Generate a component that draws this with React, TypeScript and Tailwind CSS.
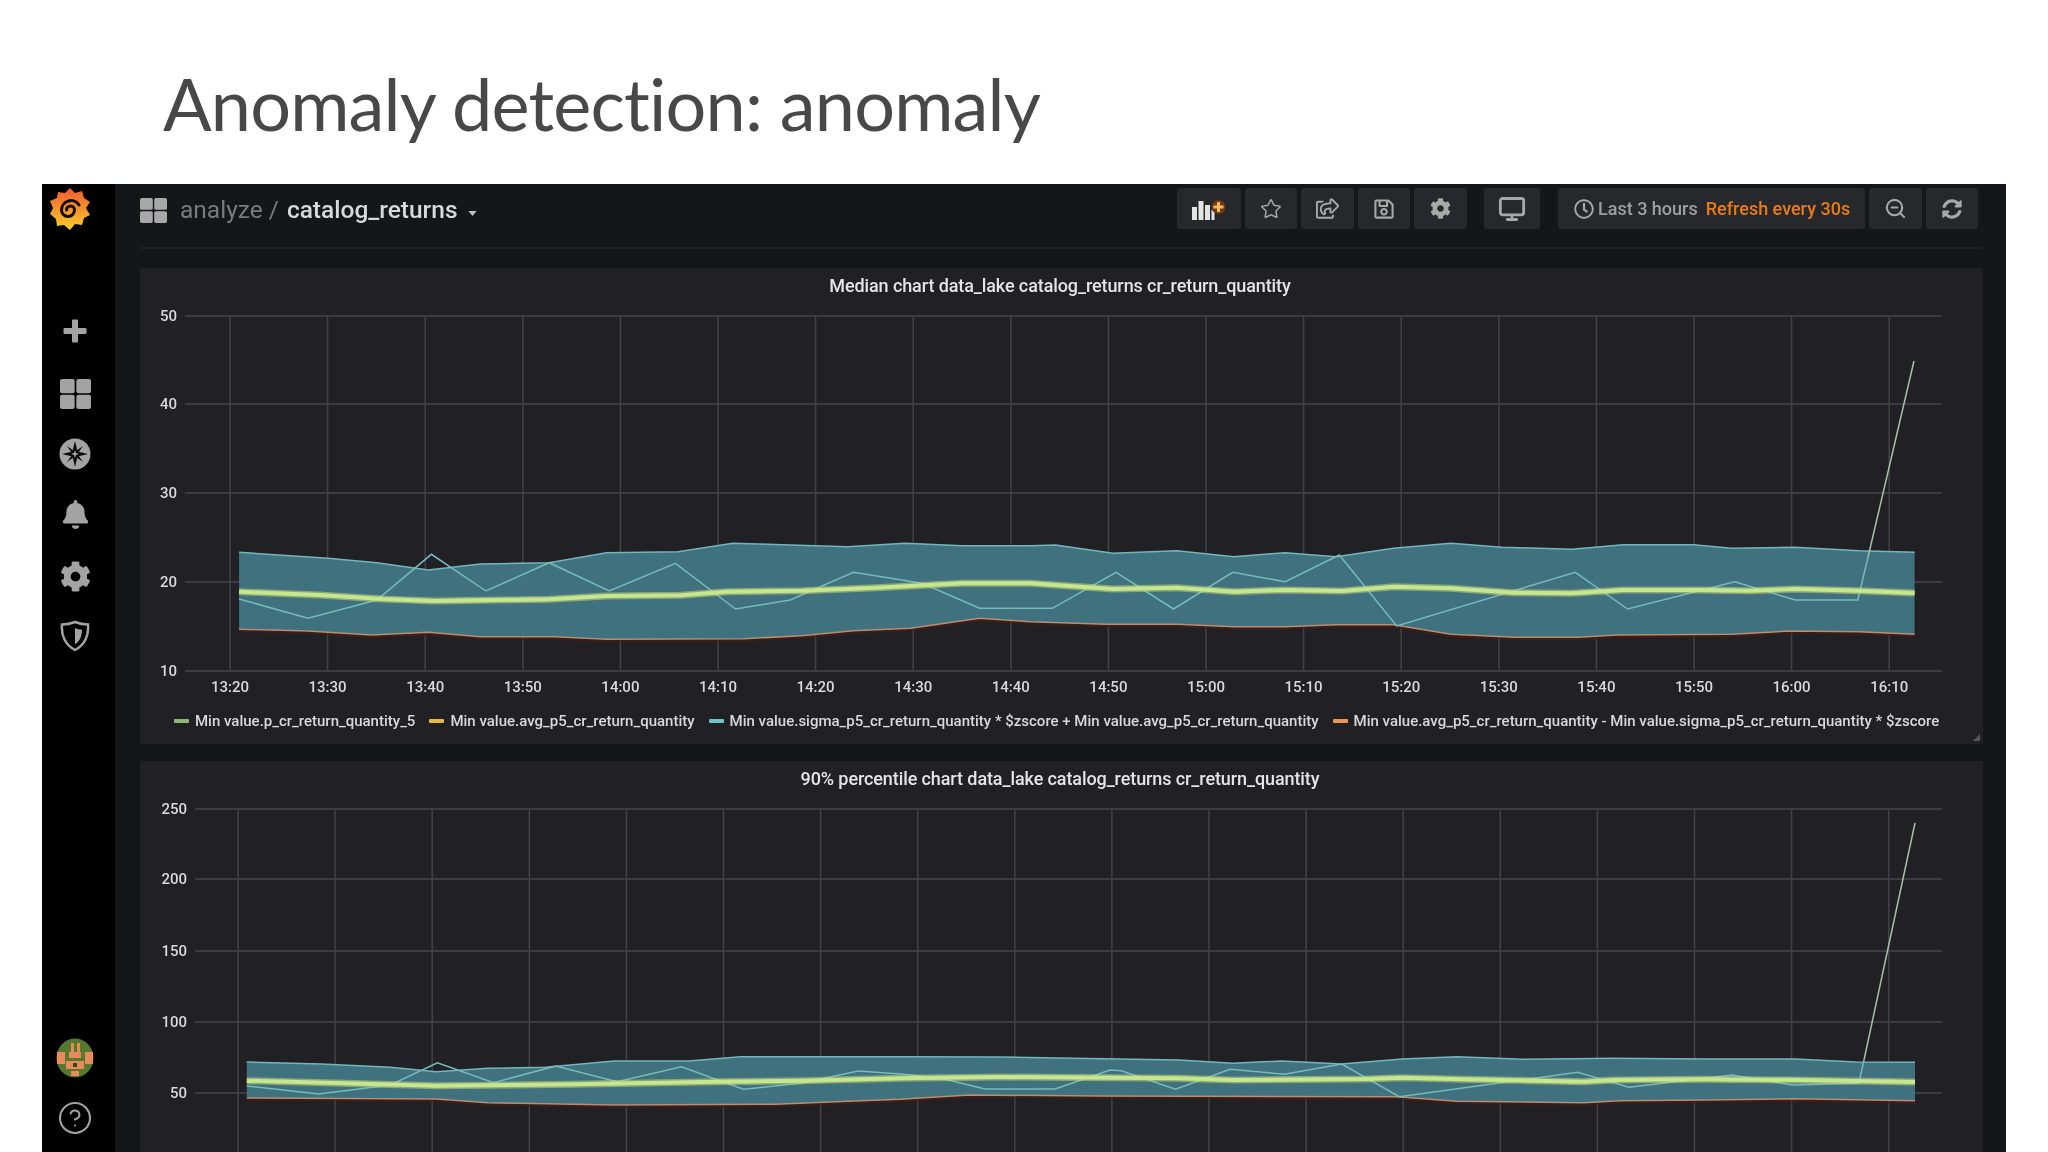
import { Star, Monitor, CircleHelp, ZoomOut } from 'lucide-react'
import { FaBell, FaCog, FaRegClock, FaRegSave, FaRegShareSquare, FaSyncAlt } from 'react-icons/fa'

type Pt = number[]

// helpers: points were read off crops of the picture, converted to page coordinates
const a = (p: Pt[]) => p.map(([x, y]) => [130 + x / 1.742, 520 + y / 3])
const b = (p: Pt[]) => p.map(([x, y]) => [1030 + x / 1.568, 520 + y / 3])
const c = (p: Pt[]) => p.map(([x, y]) => [x / 1.742, 760 + y / 3])
const d = (p: Pt[]) => p.map(([x, y]) => [1100 + x / 1.654, 760 + y / 3])
const str = (p: Pt[]) => p.map(([x, y]) => `${x.toFixed(1)},${y.toFixed(1)}`).join(' ')

const chart1 = {
  top: [...a([[190, 97], [345, 115], [430, 128], [520, 150], [610, 132], [730, 128], [830, 98], [955, 95], [1050, 70], [1150, 75], [1250, 80], [1350, 70], [1450, 77], [1568, 77]]), ...b([[40, 75], [130, 100], [230, 92], [320, 110], [400, 98], [480, 110], [570, 85], [660, 70], [740, 82], [850, 88], [930, 74], [1040, 74], [1100, 85], [1200, 82], [1300, 92], [1387, 97]])],
  bottom: [...a([[190, 328], [310, 333], [420, 345], [520, 337], [610, 350], [740, 350], [830, 358], [1070, 356], [1170, 347], [1260, 332], [1360, 325], [1480, 295], [1568, 305]]), ...b([[120, 313], [230, 313], [320, 320], [400, 320], [480, 314], [570, 314], [660, 343], [760, 352], [860, 352], [920, 345], [1100, 343], [1190, 333], [1300, 335], [1387, 343]])],
  mean: [...a([[190, 215], [330, 225], [440, 237], [530, 243], [730, 238], [830, 228], [960, 226], [1040, 215], [1170, 212], [1300, 203], [1450, 190], [1568, 190]]), ...b([[130, 207], [230, 203], [320, 215], [400, 210], [490, 213], [570, 200], [660, 205], [760, 218], [850, 220], [930, 210], [1050, 210], [1130, 212], [1200, 207], [1300, 212], [1387, 219]])],
  thin: [...a([[190, 237], [310, 295], [430, 240], [525, 103], [620, 213], [730, 128], [835, 213], [950, 130], [1055, 267], [1150, 240], [1260, 157], [1380, 190], [1480, 265], [1568, 265]]), ...b([[35, 265], [135, 157], [225, 267], [318, 157], [400, 185], [485, 105], [575, 318], [855, 157], [937, 267], [1105, 185], [1200, 240], [1298, 240]]), [1868.3, 556]],
  spike: [[1868.3, 556], [1914, 361]],
}

const chart2 = {
  top: [...c([[430, 906], [560, 912], [680, 922], [760, 935], [850, 925], [950, 922], [1070, 903], [1200, 903], [1290, 890], [1568, 890]]), [1000, 1057], ...d([[130, 900], [220, 910], [300, 903], [400, 912], [500, 897], [590, 890], [700, 898], [850, 895], [1000, 897], [1150, 897], [1250, 906], [1348, 907]])],
  bottom: [...c([[430, 1014], [760, 1017], [850, 1028], [1070, 1035], [1350, 1033], [1500, 1022], [1568, 1018]]), [920, 1098], [970, 1095], [1100, 1096], ...d([[490, 1010], [590, 1024], [800, 1028], [860, 1022], [1000, 1020], [1150, 1016], [1348, 1022]])],
  mean: [...c([[430, 962], [600, 970], [760, 977], [1000, 973], [1250, 965], [1400, 962], [1568, 955]]), [1000, 1077], ...d([[130, 955], [220, 960], [440, 957], [500, 953], [600, 958], [800, 965], [850, 960], [1000, 958], [1150, 960], [1348, 966]])],
  thin: [...c([[430, 978], [555, 1002], [680, 975], [762, 908], [860, 968], [968, 918], [1075, 965], [1187, 920], [1295, 988], [1395, 970], [1495, 933], [1568, 942]]), [940, 1078], [985, 1089], [1055, 1089], [1110, 1070], ...d([[35, 932], [125, 988], [215, 928], [305, 943], [400, 912], [495, 1010], [790, 937], [875, 982], [1045, 945], [1145, 975], [1255, 970]]), [1864, 1060]],
  spike: [[1864, 1060], [1915, 823]],
}

const times = ['13:20', '13:30', '13:40', '13:50', '14:00', '14:10', '14:20', '14:30', '14:40', '14:50', '15:00', '15:10', '15:20', '15:30', '15:40', '15:50', '16:00', '16:10']

function Series({ s }: { s: typeof chart1 }) {
  return (
    <>
      <polygon points={str([...s.top, ...[...s.bottom].reverse()])} fill="#417683" fillOpacity={0.95} />
      <polyline points={str(s.bottom.map(([x, y]) => [x, y + 2]))} fill="none" stroke="#4a1c16" strokeOpacity={0.7} strokeWidth={2} />
      <polyline points={str(s.bottom)} fill="none" stroke="#b98e74" strokeWidth={1.5} />
      <polyline points={str(s.top)} fill="none" stroke="#74b6bc" strokeWidth={1.5} />
      <polyline points={str(s.thin)} fill="none" stroke="#76bcbc" strokeWidth={1.5} />
      <polyline points={str(s.spike)} fill="none" stroke="#a9bfa8" strokeWidth={1.5} />
      <polyline points={str(s.mean)} fill="none" stroke="#d6cf78" strokeOpacity={0.55} strokeWidth={7} />
      <polyline points={str(s.mean)} fill="none" stroke="#c4e88e" strokeWidth={4} />
    </>
  )
}

function GridIcon({ w, h, color }: { w: number; h: number; color: string }) {
  return (
    <svg width={w} height={h} viewBox="0 0 30 30" preserveAspectRatio="none" fill={color}>
      <rect x="0" y="0" width="14.2" height="14.2" rx="2" />
      <rect x="15.8" y="0" width="14.2" height="14.2" rx="2" />
      <rect x="0" y="15.8" width="14.2" height="14.2" rx="2" />
      <rect x="15.8" y="15.8" width="14.2" height="14.2" rx="2" />
    </svg>
  )
}

function GrafanaLogo() {
  return (
    <svg width="42" height="44" viewBox="0 0 42 44">
      <defs>
        <linearGradient id="gf" x1="0" y1="0" x2="0" y2="1">
          <stop offset="0" stopColor="#ee5a30" />
          <stop offset="1" stopColor="#fbcf2a" />
        </linearGradient>
      </defs>
      <polygon fill="url(#gf)" points="21,1 26,6 33,4 35,11 41,15 37,21 41,28 35,31 33,38 26,37 21,43 15,38 8,39 7,32 1,27 4,21 1,14 8,11 9,5 16,6" />
      <path d="M17.5 23 A4 4 0 0 1 25.5 23 A6.5 6.5 0 0 1 12.5 23 A9.5 9.5 0 0 1 30 18" fill="none" stroke="#1a0d08" strokeWidth="3" strokeLinecap="round" />
    </svg>
  )
}

function CompassIcon() {
  return (
    <svg width="32" height="32" viewBox="0 0 32 32">
      <circle cx="16" cy="16" r="15.5" fill="#a3a3a3" />
      <polygon fill="#0a0a0a" points="16,3 18.5,13.5 29,16 18.5,18.5 16,29 13.5,18.5 3,16 13.5,13.5" />
      <polygon fill="#0a0a0a" points="8,8 15,13 13,15" />
      <polygon fill="#0a0a0a" points="24,8 19,15 17,13" />
      <polygon fill="#0a0a0a" points="8,24 13,17 15,19" />
      <polygon fill="#0a0a0a" points="24,24 17,19 19,17" />
      <polygon fill="#a3a3a3" points="16,12 17,15 20,16 17,17 16,20 15,17 12,16 15,15" />
    </svg>
  )
}

function ShieldIcon() {
  return (
    <svg width="30" height="32" viewBox="0 0 30 32">
      <path d="M15 2 C20 4 24 4.5 28 4.5 C29 15 25 25 15 30 C5 25 1 15 2 4.5 C6 4.5 10 4 15 2 Z" fill="none" stroke="#a3a3a3" strokeWidth="2.5" />
      <path d="M15 8 C17 9 19.5 9.5 22 9.5 C22 16 20 21 15 24.5 Z" fill="#a3a3a3" />
    </svg>
  )
}

function PlusIcon() {
  return (
    <svg width="24" height="24" viewBox="0 0 24 24" fill="#a3a3a3">
      <rect x="9" y="0.5" width="6" height="23" rx="1" />
      <rect x="0.5" y="9" width="23" height="6" rx="1" />
    </svg>
  )
}

function Avatar() {
  return (
    <svg width="38" height="40" viewBox="0 0 38 40">
      <ellipse cx="19" cy="20" rx="18.5" ry="19.5" fill="#557a2e" />
      <path d="M1 14 h8 v12 h-8 z M29 14 h8 v12 h-8 z" fill="#e88a5c" />
      <path d="M15 5 h3 v9 h-3 z M21 5 h3 v9 h-3 z M13 14 h12 v6 h-12 z M10 23 h18 v8 h-18 z M15 33 h8 v5 h-8 z" fill="#e88a5c" />
      <path d="M17 25 h4 v4 h-4 z" fill="#33451e" />
    </svg>
  )
}

function PanelIcon() {
  return (
    <svg width="34" height="22" viewBox="0 0 34 22">
      <rect x="0" y="9" width="5" height="13" fill="#e4e4e4" />
      <rect x="6.5" y="3" width="5" height="19" fill="#e4e4e4" />
      <rect x="13" y="7" width="5" height="15" fill="#e4e4e4" />
      <rect x="19.5" y="12" width="3" height="10" fill="#e4e4e4" />
      <circle cx="26.5" cy="9" r="7" fill="#6e3a12" />
      <path d="M25 4 h3 v3.5 h3.5 v3 h-3.5 v3.5 h-3 v-3.5 h-3.5 v-3 h3.5 z" fill="#f4b860" />
    </svg>
  )
}

function ToolButton({ w, children }: { w: string; children: React.ReactNode }) {
  return <div className={`${w} h-[41px] rounded-[3px] bg-[#27282b] flex items-center justify-center text-[#a8a8a8]`}>{children}</div>
}

function LegendItem({ color, label }: { color: string; label: string }) {
  return (
    <div className="flex items-center gap-[6px]">
      <span className="w-[15px] h-[4px] rounded-[1px]" style={{ backgroundColor: color }} />
      <span>{label}</span>
    </div>
  )
}

export default function App() {
  return (
    <div className="w-[2048px] h-[1152px] bg-white overflow-hidden flex flex-col font-['Roboto',sans-serif]">
      <div className="h-[184px] shrink-0 pl-[163px] pt-[59px]">
        <h1 className="font-['Lato',sans-serif] text-[72px] leading-[88px] tracking-[-0.8px] text-[#484848]">Anomaly detection: anomaly</h1>
      </div>

      <div className="ml-[42px] w-[1964px] flex-1 min-h-0 flex bg-[#15161a] blur-[0.5px]">
        <aside className="w-[73px] shrink-0 bg-black flex flex-col items-center pr-[7px] text-[#a3a3a3]">
          <div className="h-[50px] flex items-center justify-center -ml-[10px]"><GrafanaLogo /></div>
          <div className="h-[67px]" />
          <div className="h-[60px] flex items-center justify-center"><PlusIcon /></div>
          <div className="h-[60px] mt-[3px] flex items-center justify-center"><GridIcon w={31} h={30} color="#a3a3a3" /></div>
          <div className="h-[60px] flex items-center justify-center"><CompassIcon /></div>
          <div className="h-[60px] flex items-center justify-center"><FaBell size={29} /></div>
          <div className="h-[60px] mt-[2px] flex items-center justify-center"><FaCog size={31} /></div>
          <div className="h-[60px] flex items-center justify-center"><ShieldIcon /></div>
          <div className="flex-1" />
          <div className="h-[60px] flex items-center justify-center"><Avatar /></div>
          <div className="h-[60px] mb-[4px] flex items-center justify-center"><CircleHelp size={36} strokeWidth={1.4} /></div>
        </aside>

        <main className="flex-1 min-w-0 pl-[25px] pr-[23px] flex flex-col">
          <header className="h-[65px] shrink-0 border-b-2 border-[#1f2023] flex justify-between pt-[4px] pr-[5px]">
            <div className="flex items-center h-[41px] pt-[3px] gap-[13px] text-[24.5px]">
              <GridIcon w={27} h={25} color="#a8a8a8" />
              <div className="flex items-center gap-[8px]">
                <span className="text-[#7b7b7f]">analyze /</span>
                <span className="text-[#d8d9da] font-medium">catalog_returns</span>
                <svg width="9" height="5" viewBox="0 0 10 6" className="ml-[2px] mt-[6px]"><polygon points="0,0 10,0 5,6" fill="#c0c0c0" /></svg>
              </div>
            </div>
            <div className="flex">
              <div className="flex gap-[4px]">
                <ToolButton w="w-[64px]"><PanelIcon /></ToolButton>
                <ToolButton w="w-[52px]"><Star size={22} strokeWidth={1.6} /></ToolButton>
                <ToolButton w="w-[53px]"><FaRegShareSquare size={23} /></ToolButton>
                <ToolButton w="w-[52px]"><FaRegSave size={22} /></ToolButton>
                <ToolButton w="w-[53px]"><FaCog size={21} /></ToolButton>
              </div>
              <div className="ml-[17px]">
                <ToolButton w="w-[56px]"><Monitor size={28} strokeWidth={2.4} /></ToolButton>
              </div>
              <div className="ml-[18px] flex gap-[4px]">
                <div className="w-[307px] h-[41px] rounded-[3px] bg-[#27282b] flex items-center pl-[16px] text-[18px] font-medium">
                  <FaRegClock size={20} className="text-[#a8a8a8] mr-[4px]" />
                  <span className="text-[#a0a0a4]">Last 3 hours</span>
                  <span className="text-[#eb7b18] ml-[8px]">Refresh every 30s</span>
                </div>
                <ToolButton w="w-[53px]"><ZoomOut size={23} strokeWidth={2.2} /></ToolButton>
                <ToolButton w="w-[52px]"><FaSyncAlt size={20} /></ToolButton>
              </div>
            </div>
          </header>

          <section className="mt-[19px] h-[476px] shrink-0 bg-[#212025] flex flex-col">
            <h2 className="h-[32px] shrink-0 pt-[6px] pr-[3px] text-center text-[18px] leading-[24px] font-medium text-[#e4e5e6] tracking-[-0.1px]">Median chart data_lake catalog_returns cr_return_quantity</h2>
            <svg width="1843" height="400" viewBox="140 300 1843 400" className="shrink-0">
              {[316, 404, 493, 582, 671].map((y) => (
                <line key={y} x1="185" x2="1942" y1={y} y2={y} stroke="#3c3c41" strokeWidth="2" />
              ))}
              {times.map((_, i) => (
                <line key={i} x1={230 + i * 97.6} x2={230 + i * 97.6} y1="316" y2="671" stroke="#424247" strokeWidth="1.5" />
              ))}
              <Series s={chart1} />
              {['50', '40', '30', '20', '10'].map((t, i) => (
                <text key={t} x="177" y={[316, 404, 493, 582, 671][i] + 5} textAnchor="end" fontSize="15" fontWeight="500" fill="#d8d9da">{t}</text>
              ))}
              {times.map((t, i) => (
                <text key={t} x={230 + i * 97.6} y="692" textAnchor="middle" fontSize="15" fontWeight="500" fill="#d8d9da">{t}</text>
              ))}
            </svg>
            <div className="flex-1 flex items-center pl-[34px] gap-[14px] text-[15px] font-medium text-[#d8d9da] pb-[2px] relative">
              <LegendItem color="#8fb77a" label="Min value.p_cr_return_quantity_5" />
              <LegendItem color="#e8b83f" label="Min value.avg_p5_cr_return_quantity" />
              <LegendItem color="#6fc4c8" label="Min value.sigma_p5_cr_return_quantity * $zscore + Min value.avg_p5_cr_return_quantity" />
              <LegendItem color="#e8965a" label="Min value.avg_p5_cr_return_quantity - Min value.sigma_p5_cr_return_quantity * $zscore" />
              <span className="absolute right-[3px] bottom-[3px] w-0 h-0 border-l-[7px] border-b-[7px] border-l-transparent border-b-[#55555a]" />
            </div>
          </section>

          <section className="mt-[17px] flex-1 min-h-0 bg-[#212025] flex flex-col overflow-hidden">
            <h2 className="h-[33px] shrink-0 pt-[6px] pr-[3px] text-center text-[18px] leading-[24px] font-medium text-[#e4e5e6] tracking-[-0.1px]">90% percentile chart data_lake catalog_returns cr_return_quantity</h2>
            <svg width="1843" height="358" viewBox="140 794 1843 358" className="shrink-0">
              {[809, 879, 951, 1022, 1093].map((y) => (
                <line key={y} x1="195" x2="1942" y1={y} y2={y} stroke="#3c3c41" strokeWidth="2" />
              ))}
              {times.map((_, i) => (
                <line key={i} x1={238 + i * 97.1} x2={238 + i * 97.1} y1="809" y2="1152" stroke="#424247" strokeWidth="1.5" />
              ))}
              <Series s={chart2} />
              {['250', '200', '150', '100', '50'].map((t, i) => (
                <text key={t} x="187" y={[809, 879, 951, 1022, 1093][i] + 5} textAnchor="end" fontSize="15" fontWeight="500" fill="#d8d9da">{t}</text>
              ))}
            </svg>
          </section>
        </main>
      </div>
    </div>
  )
}
